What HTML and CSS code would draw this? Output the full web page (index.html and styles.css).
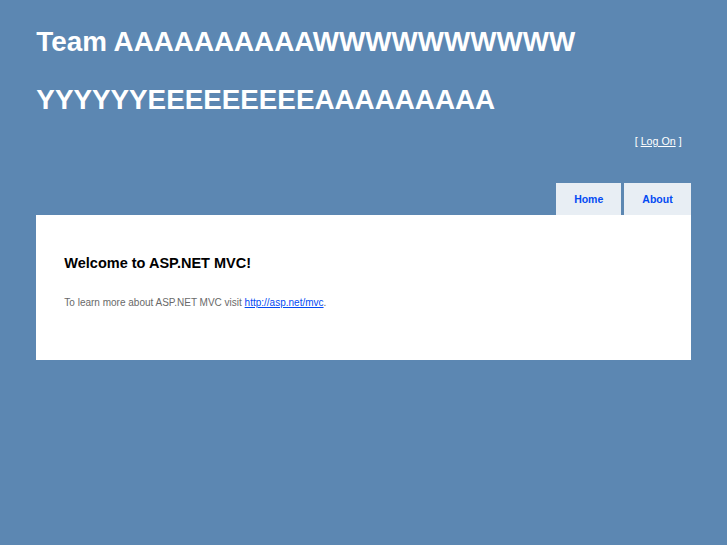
FILE: index.html
```html
<!DOCTYPE html>
<html>

<head>
  <meta charset="UTF-8">
  <meta name="viewport" content="width=device-width, initial-scale=1">
  <title>Home Page</title>

  <link rel="stylesheet" href="styles.css">
</head>

<body>
  <div class="page">
    <div id="header" class="header">
      <div id="title" class="title">
        <h1>Team AAAAAAAAAAWWWWWWWWWW YYYYYYEEEEEEEEEAAAAAAAAA</h1>
      </div>

      <div id="logindisplay" class="logindisplay">
        [ <a href="#">Log On</a> ]
      </div>

      <div id="menucontainer" class="menucontainer">
        <ul id="menu" class="menu">
          <li><a href="#">Home</a></li>
          <li><a href="#">About</a></li>
        </ul>
      </div>
    </div>

    <div id="main" class="main">
      <h2>Welcome to ASP.NET MVC!</h2>
      <p>
        To learn more about ASP.NET MVC visit <a href="#" class="link">http://asp.net/mvc</a>.
      </p>
    </div>
  </div>
</body>

</html>
```

FILE: styles.css
```css
* {
  box-sizing: border-box;
}

body {
  background-color: #5c87b2;
  font-family: "Liberation Sans", Arial, sans-serif;
  font-size: 10px;
  margin: 0;
  padding: 0;
  color: #696969;
}

.page {
  width: 90%;
  margin: 0 auto;
}

.title h1 {
  margin: 0;
  padding: 13px 0 0 0;
  color: #fff;
  font-size: 27.8px;
  font-weight: bold;
  line-height: 58px;
}

.logindisplay {
  margin: 6px 9px 0 0;
  text-align: right;
  color: #fff;
  font-size: 10.7px;
  line-height: 12px;
}

.logindisplay a {
  color: #fff;
  text-decoration: underline;
}

.menucontainer {
  margin-top: 36px;
}

.menu {
  display: flex;
  justify-content: flex-end;
  gap: 3px;
  margin: 0;
  padding: 0;
  list-style: none;
}

.menu a {
  display: block;
  height: 32px;
  padding: 0 18px;
  line-height: 32px;
  background-color: #e8eef4;
  color: #034af3;
  font-size: 10.5px;
  font-weight: bold;
  text-decoration: none;
}

.main {
  background-color: #fff;
  padding: 40px 28px 52px 28px;
}

.main h2 {
  margin: 0 0 26px 0;
  color: #000;
  font-size: 14.5px;
  font-weight: bold;
}

.main p {
  margin: 0;
  font-size: 10px;
}

.link {
  color: #034af3;
  text-decoration: underline;
}
```
